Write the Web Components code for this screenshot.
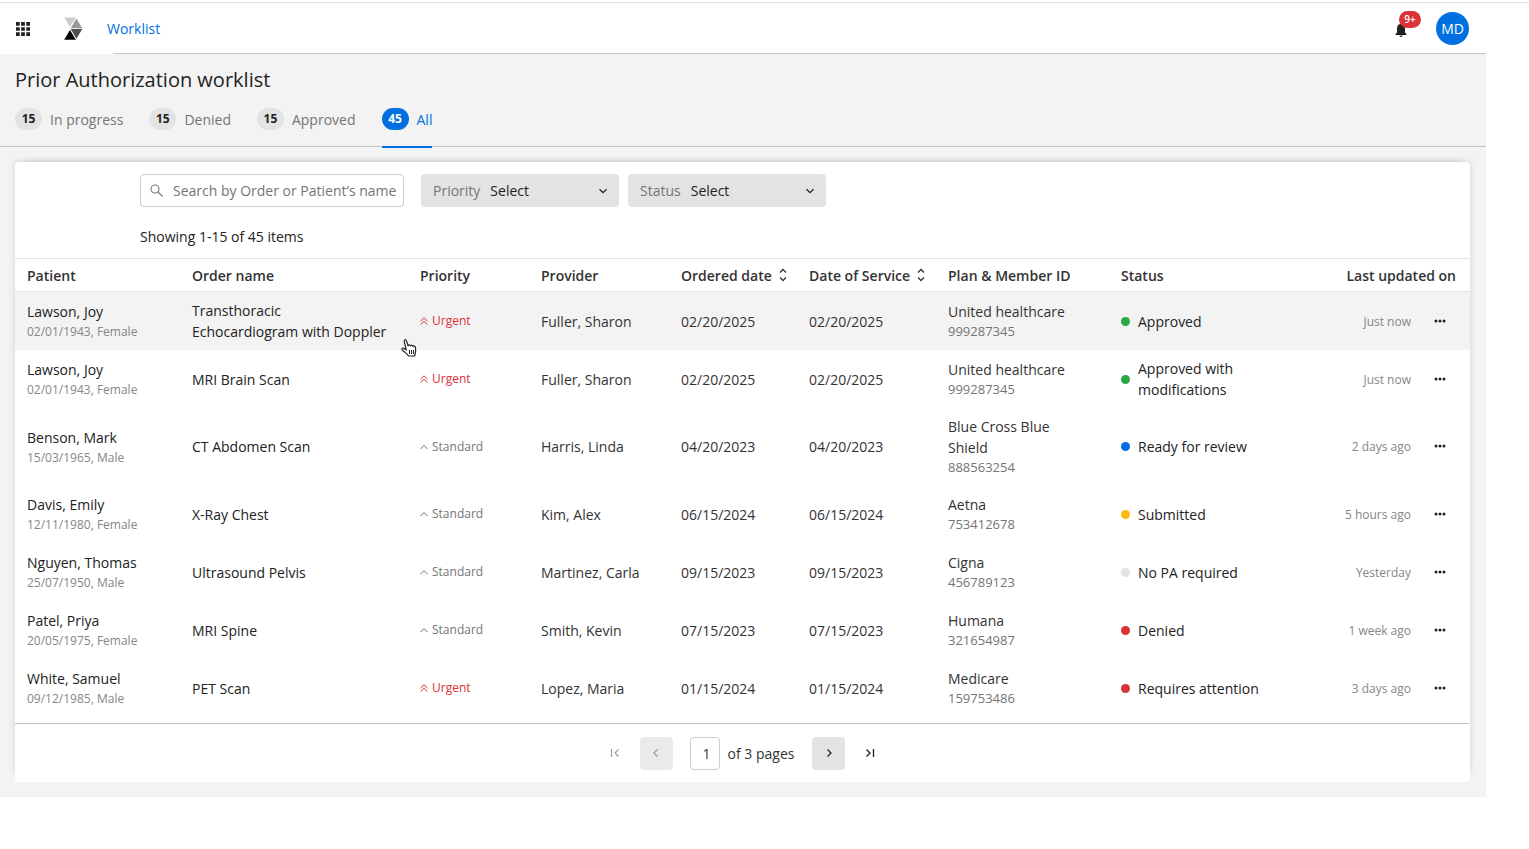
<!DOCTYPE html>
<html lang="en">
<head>
<meta charset="utf-8">
<title>Prior Authorization worklist</title>
<style>
  body { margin: 0; background: #fff; }
</style>
</head>
<body>
<wl-app></wl-app>
<script>
const define = (name, html) => {
  const tpl = document.createElement('template');
  customElements.define(name, class extends HTMLElement {
    connectedCallback() {
      if (this.shadowRoot) return;
      const root = this.attachShadow({ mode: 'open' });
      tpl.innerHTML = `<style>*{box-sizing:border-box}button,input,select{font:inherit;color:inherit;margin:0}button{border:0;background:none;padding:0;cursor:pointer}svg{display:block}</style>` + (typeof html === 'function' ? html(this) : html);
      root.append(tpl.content.cloneNode(true));
    }
  });
};

/* Line icons: [size, markup] */
const ICONS = {
  down: [12, '<path d="M2.500 4.200L6 7.700l3.500-3.500"/>'],
  left: [12, '<path d="M7.500 2.500L4 6l3.500 3.500"/>'],
  right: [12, '<path d="M4.500 2.500L8 6l-3.500 3.500"/>'],
  first: [12, '<path d="M2.500 2v8M9.500 2.500L6 6l3.500 3.500"/>'],
  last: [12, '<path d="M9.500 2v8M2.500 2.500L6 6l-3.500 3.500"/>'],
  sort: [14, '<path d="M4 4.500l3-3 3 3M4 9.500l3 3 3-3"/>'],
  up: [8, '<path d="M.5 6L4 2.500 7.500 6"/>'],
  up2: [8, '<path d="M.5 4.200L4 .8l3.500 3.400M.5 7.700L4 4.300l3.500 3.400"/>'],
  search: [13, '<circle cx="5" cy="5" r="4"/><path d="M8 8l4.500 4.500"/>'],
  more: [12, '<g fill="currentColor" stroke="none"><circle cx="2" cy="6" r="1.500"/><circle cx="6" cy="6" r="1.500"/><circle cx="10" cy="6" r="1.500"/></g>']
};
define('wl-icon', el => {
  const [s, body] = ICONS[el.getAttribute('name')];
  return `<style>:host{display:inline-block;flex:none}</style>
  <svg width="${s}" height="${s}" viewBox="0 0 ${s} ${s}" fill="none" stroke="currentColor" stroke-width="${el.getAttribute('weight') || 1.3}" aria-hidden="true">${body}</svg>`;
});

define('wl-header', `
<style>
  :host{display:block;background:#fff}
  header{display:flex;align-items:center;height:51px;padding:0 17px 0 16px;background:linear-gradient(#c8c8c8,#c8c8c8) 113px 100%/100% 1px no-repeat}
  .logo{margin-left:34px}
  a{margin-left:24px;color:#0070e0;font-size:14px;text-decoration:none}
  .bell{position:relative;margin-left:auto;margin-top:3px}
  .count{position:absolute;left:4px;top:-13px;width:22px;height:17px;border-radius:9px;background:#d93237;color:#fff;font-size:10px;font-weight:600;line-height:17px;text-align:center}
  .avatar{width:33px;height:33px;margin-left:29px;border-radius:50%;background:#0070e0;color:#fff;font-size:14px;line-height:32px}
</style>
<header>
  <button aria-label="Apps"><svg width="14" height="14" viewBox="0 0 15 15" fill="#222"><path d="M0 0h4v4H0zM5.500 0h4v4h-4zM11 0h4v4h-4zM0 5.500h4v4H0zM5.500 5.500h4v4h-4zM11 5.500h4v4h-4zM0 11h4v4H0zM5.500 11h4v4h-4zM11 11h4v4h-4z"/></svg></button>
  <svg class="logo" width="19" height="23" viewBox="0 0 19 23" aria-hidden="true"><path fill="#ccc" d="M.2.500h11.600L6 10z"/><path fill="#999" d="M12.400 1.500L18.300 11.200H6.700z"/><path fill="#505050" d="M6.700 12.100h11.600l-5.900 9.700z"/><path fill="#000" d="M.2 22.800L6 13l5.800 9.800z"/></svg>
  <a href="#">Worklist</a>
  <button class="bell" aria-label="Notifications"><svg width="12" height="13" viewBox="0 0 12 13" fill="#222"><path d="M6 0C3.300 0 2 2 2 4.500v4L.5 10v1h11v-1L10 8.500v-4C10 2 8.700 0 6 0zM4.500 11.600h3C7.500 12.500 6.800 13 6 13s-1.500-.5-1.500-1.400z"/></svg><span class="count">9+</span></button>
  <button class="avatar">MD</button>
</header>`);

define('wl-tab', `
<style>
  :host{display:block}
  button{display:flex;align-items:center;gap:8px;height:40px;padding-bottom:16px;border-bottom:2px solid transparent;color:#757575;font-size:14px}
  ::slotted([slot=count]){width:27px;height:22px;border-radius:11px;background:#e3e3e3;color:#222;font-size:12px;font-weight:700;line-height:21px;text-align:center}
  :host([selected]) button{color:#0070e0;border-color:#0070e0}
  :host([selected]) ::slotted([slot=count]){background:#0070e0;color:#fff}
</style>
<button role="tab"><slot name="count"></slot><slot></slot></button>`);

define('wl-tabs', `
<style>
  :host{display:block;padding:0 15px;box-shadow:inset 0 -1px #f3f3f3,inset 0 -2px #c4c4c4}
  div{display:flex;gap:26px}
</style>
<div role="tablist"><slot></slot></div>`);

define('wl-search', `
<style>
  :host{display:block;width:264px}
  label{display:flex;align-items:center;gap:10px;height:33px;padding:0 2px 0 9px;border:1px solid #ccc;border-radius:4px;color:#757575}
  input{flex:1;min-width:0;border:0;padding:0;outline:0;background:none;font-size:14px}
  input::placeholder{color:#757575;opacity:1}
</style>
<label><wl-icon name="search" weight="1.1"></wl-icon><input type="text" aria-label="Search" placeholder="Search by Order or Patient’s name"></label>`);

define('wl-select', `
<style>
  :host{display:block;width:198px}
  div{display:flex;align-items:center;gap:10px;height:33px;padding:0 10px 0 12px;border-radius:4px;background:#e3e3e3;font-size:14px}
  label{color:#757575}
  .box{flex:1;display:grid;align-items:center}
  select,wl-icon{grid-area:1/1}
  select{appearance:none;border:0;padding:0;background:none;color:#222;font-weight:500}
  wl-icon{justify-self:end;pointer-events:none}
</style>
<div><label for="s"><slot></slot></label><span class="box"><select id="s"><option>Select</option></select><wl-icon name="down"></wl-icon></span></div>`);

define('wl-priority', el => `
<style>
  :host{display:flex;align-items:center;gap:4px;font-size:12px;line-height:20px;color:#757575}
  :host([urgent]){color:#d93237}
</style>
<wl-icon name="${el.hasAttribute('urgent') ? 'up2' : 'up'}" weight="1"></wl-icon><slot></slot>`);

define('wl-status', `
<style>
  :host{display:flex;align-items:center;gap:8px;font-weight:500}
  i{flex:none;width:9px;height:9px;border-radius:50%;background:var(--dot)}
</style>
<i></i><span><slot></slot></span>`);

const rows = [
  ['Lawson, Joy','02/01/1943, Female','Transthoracic<br>Echocardiogram with Doppler',1,'Fuller, Sharon','02/20/2025','United healthcare','999287345','#2ba843','Approved','Just now'],
  ['Lawson, Joy','02/01/1943, Female','MRI Brain Scan',1,'Fuller, Sharon','02/20/2025','United healthcare','999287345','#2ba843','Approved with modifications','Just now'],
  ['Benson, Mark','15/03/1965, Male','CT Abdomen Scan',0,'Harris, Linda','04/20/2023','Blue Cross Blue Shield','888563254','#0070e0','Ready for review','2 days ago'],
  ['Davis, Emily','12/11/1980, Female','X-Ray Chest',0,'Kim, Alex','06/15/2024','Aetna','753412678','#fdb913','Submitted','5 hours ago'],
  ['Nguyen, Thomas','25/07/1950, Male','Ultrasound Pelvis',0,'Martinez, Carla','09/15/2023','Cigna','456789123','#e3e3e3','No PA required','Yesterday'],
  ['Patel, Priya','20/05/1975, Female','MRI Spine',0,'Smith, Kevin','07/15/2023','Humana','321654987','#d93237','Denied','1 week ago'],
  ['White, Samuel','09/12/1985, Male','PET Scan',1,'Lopez, Maria','01/15/2024','Medicare','159753486','#d93237','Requires attention','3 days ago']
];
const pointer = `<svg class="pointer" width="18" height="20" viewBox="0 0 18 20" aria-hidden="true"><path fill="#fff" stroke="#222" stroke-width="1.200" stroke-linejoin="round" d="M6.300 12L4.200 3.600C3.800 1.600 5.800 1 6.400 2.800l1.700 5c.2-1.300 2-1.300 2.400.1.500-1 2.100-.8 2.400.5.600-.8 2.300-.4 2.500.9.400 2.200.7 4.200-.2 6.200l-.6 2.500H8.500C7.500 15.700 4 14 2.200 11.800 1.400 10.500 2.800 9.600 4 10.400z"/><path stroke="#222" d="M9.500 12v4M11.500 12v4M13.500 12v4"/></svg>`;

define('wl-table', () => `
<style>
  :host{display:block;border-bottom:1px solid #c4c4c4;padding-bottom:6px}
  table{width:100%;table-layout:fixed;border-collapse:collapse;font-size:14px;line-height:21px;color:#333}
  th{height:33px;padding:0 0 0 12px;border:solid #e3e3e3;border-width:1px 0;text-align:left;font-weight:600;white-space:nowrap}
  th.end{text-align:right;padding-right:14px}
  th button{display:flex;align-items:center;gap:4px}
  td{height:58px;padding:8px 0 8px 12px}
  tbody tr:first-child{background:#f3f3f3}
  .name,.order{color:#222;font-weight:500}
  .order{position:relative}
  .plan{padding-right:40px}
  .state{padding-right:60px;color:#222}
  small{display:block;font-size:12px;line-height:19px;color:#868686;font-weight:400;white-space:nowrap}
  .plan small{font-size:13px;color:#757575}
  .when{padding:0;text-align:right;font-size:12px;color:#868686}
  td button{display:block;margin-left:11px;color:#222}
  .pointer{position:absolute;left:220px;top:46px}
</style>
<table>
  <colgroup><col style="width:165px"><col style="width:228px"><col style="width:121px"><col style="width:140px"><col style="width:128px"><col style="width:139px"><col style="width:173px"><col style="width:214px"><col style="width:88px"><col style="width:59px"></colgroup>
  <thead><tr><th>Patient</th><th>Order name</th><th>Priority</th><th>Provider</th>
    <th><button>Ordered date <wl-icon name="sort"></wl-icon></button></th><th><button>Date of Service <wl-icon name="sort"></wl-icon></button></th>
    <th>Plan &amp; Member ID</th><th>Status</th><th class="end" colspan="2">Last updated on</th></tr></thead>
  <tbody>${rows.map(([name, born, order, urgent, provider, date, plan, id, dot, status, when], i) => `
    <tr><td class="name">${name}<small>${born}</small></td><td class="order">${order}${i ? '' : pointer}</td>
    <td><wl-priority ${urgent ? 'urgent' : ''}>${urgent ? 'Urgent' : 'Standard'}</wl-priority></td>
    <td>${provider}</td><td>${date}</td><td>${date}</td><td class="plan">${plan}<small>${id}</small></td>
    <td class="state"><wl-status style="--dot:${dot}">${status}</wl-status></td>
    <td class="when">${when}</td><td><button aria-label="More actions"><wl-icon name="more"></wl-icon></button></td></tr>`).join('')}
  </tbody>
</table>`);

define('wl-pager', `
<style>
  :host{display:flex;justify-content:center;align-items:center;height:58px;font-size:14px;color:#333}
  button{display:grid;place-items:center;width:33px;height:33px;border-radius:4px;color:#222}
  .fill{background:#e3e3e3}
  .off{color:#a0a0a0}
  .fill.off{background:#eaeaea}
  .prev{margin:0 17px 0 8px}
  .next{margin:0 8px 0 18px}
  label{display:flex;align-items:center;gap:8px}
  input{width:30px;height:33px;border:1px solid #ccc;border-radius:4px;padding:0 0 0 4px;text-align:center}
</style>
<button class="off" aria-label="First page" disabled><wl-icon name="first"></wl-icon></button>
<button class="fill off prev" aria-label="Previous page" disabled><wl-icon name="left"></wl-icon></button>
<label><input type="text" value="1"> of 3 pages</label>
<button class="fill next" aria-label="Next page"><wl-icon name="right"></wl-icon></button>
<button aria-label="Last page"><wl-icon name="last"></wl-icon></button>`);

define('wl-app', `
<style>
  :host{display:block;padding-top:2px;font-family:"Open Sans","Noto Sans",sans-serif;color:#222}
  .frame{border-top:1px solid #e0e0e0}
  .page{margin-right:43px;background:#f3f3f3;padding-bottom:15px}
  h1{margin:0;padding:12px 15px 0;font-size:20px;line-height:28px;font-weight:400}
  wl-tabs{margin-top:14px}
  main{margin:14px 16px 0 15px;background:#fff;border-radius:4px;box-shadow:5px -5px 7px -5px #0002,-5px -5px 7px -5px #0002}
  .filters{display:flex;gap:9px;padding:12px 0 0 125px}
  wl-search{margin-right:8px}
  p{margin:0;padding:19px 0 10px 125px;font-size:14px;line-height:22px;font-weight:500}
</style>
<div class="frame"><div class="page">
  <wl-header></wl-header>
  <h1>Prior Authorization worklist</h1>
  <wl-tabs>
    <wl-tab><span slot="count">15</span>In progress</wl-tab>
    <wl-tab><span slot="count">15</span>Denied</wl-tab>
    <wl-tab><span slot="count">15</span>Approved</wl-tab>
    <wl-tab selected><span slot="count">45</span>All</wl-tab>
  </wl-tabs>
  <main>
    <div class="filters"><wl-search></wl-search><wl-select>Priority</wl-select><wl-select>Status</wl-select></div>
    <p>Showing 1-15 of 45 items</p>
    <wl-table></wl-table>
    <wl-pager></wl-pager>
  </main>
</div></div>`);
</script>
</body>
</html>
